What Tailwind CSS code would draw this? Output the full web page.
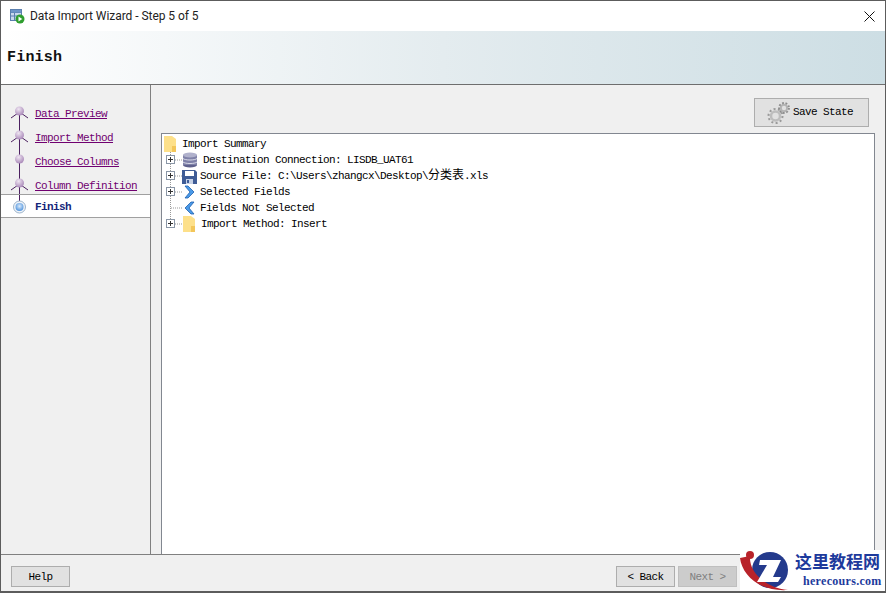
<!DOCTYPE html>
<html lang="en">
<head>
    <meta charset="UTF-8">
    <title>Data Import Wizard - Step 5 of 5</title>
    <script src="https://cdn.jsdelivr.net/npm/@tailwindcss/browser@4"></script>
</head>
<body class="bg-white">
    <div class="relative w-[886px] h-[593px] flex flex-col border border-[#5c5c5c] border-b-2 overflow-hidden bg-[#f0f0f0] font-['Liberation_Mono','Noto_Sans_CJK_SC',monospace] text-[11px] tracking-[-0.6px] text-black">

        <!-- title bar -->
        <div class="h-[30px] shrink-0 bg-white flex items-center pl-[8px] pr-[10px] font-['Roboto',sans-serif] text-[12px] tracking-[-0.05px] text-[#222]">
            <svg width="16" height="16" viewBox="0 0 16 16" class="mr-[5px]">
                <rect x="1.500" y="1.500" width="11" height="11" fill="#c9d9ee" stroke="#5b7fae"/>
                <path d="M1.500 4.500h11M1.500 8h11M5.500 1.500v11" stroke="#5b7fae" fill="none"/>
                <rect x="2" y="2" width="10" height="2.500" fill="#6d95c8"/>
                <circle cx="11" cy="11" r="4.500" fill="#2f9e2f"/>
                <path d="M9.500 8.600v4.800l3.800-2.400z" fill="#fff"/>
            </svg>
            <span class="flex-1">Data Import Wizard - Step 5 of 5</span>
            <svg width="11" height="11" viewBox="0 0 11 11"><path d="M.5.5l10 10M10.500.5l-10 10" stroke="#111" fill="none"/></svg>
        </div>

        <!-- header -->
        <div class="h-[54px] shrink-0 flex items-center pl-[6px] pt-[2px] bg-gradient-to-r from-white via-[#e4ecef] via-50% to-[#cddee4] border-b border-[#6e6e6e] font-bold text-[15px] tracking-[0.2px] text-[#111]">Finish</div>

        <div class="flex-1 flex min-h-0">
            <!-- steps -->
            <div class="w-[150px] shrink-0 border-r border-[#808080] pt-[16px] text-[#700070]">
                <div class="h-[24px] flex items-center">
                    <svg width="24" height="24" viewBox="0 0 24 24" class="ml-[6px] mr-[4px] shrink-0">
                        <defs><radialGradient id="p" cx="40%" cy="30%" r="75%"><stop offset="0" stop-color="#efe6f2"/><stop offset="1" stop-color="#a583b5"/></radialGradient></defs>
                        <path d="M12.500 12v12M4 17l8.500-6 8.500 6" stroke="#4b2060" fill="none"/>
                        <circle cx="12.500" cy="10" r="4.500" fill="url(#p)"/>
                    </svg>
                    <a class="underline pt-[2px]">Data Preview</a>
                </div>
                <div class="h-[24px] flex items-center">
                    <svg width="24" height="24" viewBox="0 0 24 24" class="ml-[6px] mr-[4px] shrink-0">
                        <path d="M12.500 0v24M4 17l8.500-6 8.500 6" stroke="#4b2060" fill="none"/>
                        <circle cx="12.500" cy="10" r="4.500" fill="url(#p)"/>
                    </svg>
                    <a class="underline pt-[2px]">Import Method</a>
                </div>
                <div class="h-[24px] flex items-center">
                    <svg width="24" height="24" viewBox="0 0 24 24" class="ml-[6px] mr-[4px] shrink-0">
                        <path d="M12.500 0v24" stroke="#4b2060" fill="none"/>
                        <circle cx="12.500" cy="10" r="4.500" fill="url(#p)"/>
                    </svg>
                    <a class="underline pt-[2px]">Choose Columns</a>
                </div>
                <div class="h-[21px] flex items-start">
                    <svg width="24" height="21" viewBox="0 0 24 21" class="ml-[6px] mr-[4px] shrink-0">
                        <path d="M12.500 0v21M4 17l8.500-6 8.500 6" stroke="#4b2060" fill="none"/>
                        <circle cx="12.500" cy="10" r="4.500" fill="url(#p)"/>
                    </svg>
                    <a class="underline mt-[5px]">Column Definition</a>
                </div>
                <div class="h-[24px] flex items-center bg-white border-y border-[#a0a0a0] font-bold text-[#14267a]">
                    <svg width="24" height="22" viewBox="0 0 24 22" class="ml-[6px] mr-[4px] shrink-0">
                        <defs><radialGradient id="b" cx="50%" cy="40%" r="60%"><stop offset="0" stop-color="#dcecfb"/><stop offset="1" stop-color="#4f93de"/></radialGradient></defs>
                        <path d="M12.500 0v6" stroke="#4b2060"/>
                        <circle cx="12.500" cy="12" r="6" fill="#eef3f8" stroke="#9db4cc"/>
                        <circle cx="12.500" cy="12" r="4" fill="url(#b)"/>
                    </svg>
                    <span class="pt-[2px]">Finish</span>
                </div>
            </div>

            <!-- main -->
            <div class="flex-1 min-w-0 flex flex-col pl-[10px] pr-[10px]">
                <div class="h-[48px] shrink-0 flex items-end justify-end pb-[6px] pr-[6px]">
                    <button class="w-[115px] h-[29px] flex items-center justify-start pl-[12px] gap-[2px] bg-[#e1e1e1] border border-[#adadad]">
                        <svg width="24" height="24" viewBox="0 0 24 24">
                            <circle cx="8.500" cy="15" r="4.500" fill="none" stroke="#bdbdbd" stroke-width="2.500"/>
                            <circle cx="8.500" cy="15" r="7" fill="none" stroke="#9a9a9a" stroke-width="2" stroke-dasharray="2 2.400"/>
                            <circle cx="17" cy="7" r="3.200" fill="#e1e1e1" stroke="#b4b4b4" stroke-width="2"/>
                            <circle cx="17" cy="7" r="5" fill="none" stroke="#8c8c8c" stroke-width="1.800" stroke-dasharray="1.800 1.700"/>
                        </svg>
                        <span>Save State</span>
                    </button>
                </div>
                <div class="flex-1 min-h-0 bg-white border border-[#828790] border-b-0 pt-[2px]">
                    <div class="h-[16px] flex items-center">
                        <svg width="14" height="16" viewBox="0 0 14 16" class="ml-[1px] mr-[5px] shrink-0">
                            <path d="M1 0h8l4 3v13H1z" fill="#fde08a"/><path d="M9 10h4v6H9z" fill="#f3c65a"/>
                        </svg>
                        <span>Import Summary</span>
                    </div>
                    <div class="h-[16px] flex items-center">
                        <svg width="20" height="16" viewBox="0 0 20 16" class="shrink-0">
                            <path d="M8.500 0v16M13 8h7" stroke="#999" stroke-dasharray="1 1" fill="none"/>
                            <rect x="4.500" y="3.500" width="8" height="8" fill="#fff" stroke="#8a96a6"/><path d="M6 7.500h5M8.500 5v5" stroke="#333"/>
                        </svg>
                        <svg width="16" height="16" viewBox="0 0 16 16" class="shrink-0">
                            <ellipse cx="8" cy="13" rx="7" ry="2.500" fill="#5f618c"/>
                            <rect x="1" y="3" width="14" height="10" fill="#7f81a8"/>
                            <path d="M1 6.500c2 2 12 2 14 0M1 10c2 2 12 2 14 0" stroke="#d9dae8" fill="none"/>
                            <ellipse cx="8" cy="3" rx="7" ry="2.500" fill="#b0b1cc"/>
                        </svg>
                        <span class="ml-[5px]">Destination Connection: LISDB_UAT61</span>
                    </div>
                    <div class="h-[16px] flex items-center">
                        <svg width="20" height="16" viewBox="0 0 20 16" class="shrink-0">
                            <path d="M8.500 0v16M13 8h7" stroke="#999" stroke-dasharray="1 1" fill="none"/>
                            <rect x="4.500" y="3.500" width="8" height="8" fill="#fff" stroke="#8a96a6"/><path d="M6 7.500h5M8.500 5v5" stroke="#333"/>
                        </svg>
                        <svg width="15" height="15" viewBox="0 0 15 15" class="shrink-0">
                            <path d="M0 1h13l2 2v12H0z" fill="#3f5c96"/>
                            <rect x="3" y="2" width="9" height="5" fill="#fff"/>
                            <rect x="4" y="10" width="7" height="5" fill="#c7d2e6"/>
                            <rect x="5" y="11" width="2" height="3" fill="#3f5c96"/>
                        </svg>
                        <span class="ml-[3px]">Source File: C:\Users\zhangcx\Desktop\<span class="text-[12px] tracking-normal">分类表</span>.xls</span>
                    </div>
                    <div class="h-[16px] flex items-center">
                        <svg width="20" height="16" viewBox="0 0 20 16" class="shrink-0">
                            <path d="M8.500 0v16M13 8h7" stroke="#999" stroke-dasharray="1 1" fill="none"/>
                            <rect x="4.500" y="3.500" width="8" height="8" fill="#fff" stroke="#8a96a6"/><path d="M6 7.500h5M8.500 5v5" stroke="#333"/>
                        </svg>
                        <svg width="15" height="16" viewBox="0 0 15 16" class="shrink-0">
                            <path d="M3 2h3l6 6-6 6H3l5-6z" fill="#4a9ae8" stroke="#1f5fae" stroke-width=".8"/>
                        </svg>
                        <span class="ml-[3px]">Selected Fields</span>
                    </div>
                    <div class="h-[16px] flex items-center">
                        <svg width="20" height="16" viewBox="0 0 20 16" class="shrink-0">
                            <path d="M8.500 0v16M9 8h11" stroke="#999" stroke-dasharray="1 1" fill="none"/>
                        </svg>
                        <svg width="15" height="16" viewBox="0 0 15 16" class="shrink-0">
                            <path d="M12 2H9L3 8l6 6h3L7 8z" fill="#4a9ae8" stroke="#1f5fae" stroke-width=".8"/>
                        </svg>
                        <span class="ml-[3px]">Fields Not Selected</span>
                    </div>
                    <div class="h-[16px] flex items-center">
                        <svg width="20" height="16" viewBox="0 0 20 16" class="shrink-0">
                            <path d="M8.500 0v4M13 8h7" stroke="#999" stroke-dasharray="1 1" fill="none"/>
                            <rect x="4.500" y="3.500" width="8" height="8" fill="#fff" stroke="#8a96a6"/><path d="M6 7.500h5M8.500 5v5" stroke="#333"/>
                        </svg>
                        <svg width="14" height="16" viewBox="0 0 14 16" class="shrink-0">
                            <path d="M1 0h8l4 3v13H1z" fill="#fde08a"/><path d="M9 10h4v6H9z" fill="#f3c65a"/>
                        </svg>
                        <span class="ml-[5px]">Import Method: Insert</span>
                    </div>
                </div>
            </div>
        </div>

        <!-- footer -->
        <div class="h-[37px] shrink-0 border-t border-[#808080] flex items-center justify-between pl-[10px] pr-[148px] pt-[7px]">
            <button class="w-[59px] h-[21px] pt-[1px] bg-[#e1e1e1] border border-[#adadad]">Help</button>
            <div class="flex gap-[3px]">
                <button class="w-[59px] h-[21px] pt-[1px] bg-[#e1e1e1] border border-[#adadad]">&lt; Back</button>
                <button class="w-[59px] h-[21px] pt-[1px] bg-[#cccccc] border border-[#bfbfbf] text-[#808080]">Next &gt;</button>
            </div>
        </div>

        <!-- site watermark -->
        <div class="absolute right-[-1px] bottom-[-2px] w-[146px] h-[43px] bg-white flex items-start">
            <svg width="54" height="43" viewBox="0 0 54 43" class="shrink-0">
                <circle cx="30" cy="20" r="18" fill="#243a8c"/>
                <path d="M0 8C2 24 18 42 48 40 24 37 9 22 10 6z" fill="#b8232a"/>
                <circle cx="10" cy="5" r="4" fill="#b8232a"/>
                <path d="M20 10h21L33 27h8l-3 5H17l10-17h-8z" fill="#fff"/>
            </svg>
            <div class="flex flex-col w-[90px] -ml-[1px] tracking-normal whitespace-nowrap">
                <span class="pl-[2px] font-['Noto_Sans_CJK_SC',sans-serif] font-bold text-[17px] leading-[22px] text-[#1d3a9c]">这里教程网</span>
                <span class="pl-[10px] font-['Liberation_Serif',serif] font-bold text-[12px] tracking-[0.3px] leading-[15px] text-[#1d3a9c] mt-[2px]">herecours.com</span>
            </div>
        </div>
    </div>
</body>
</html>
